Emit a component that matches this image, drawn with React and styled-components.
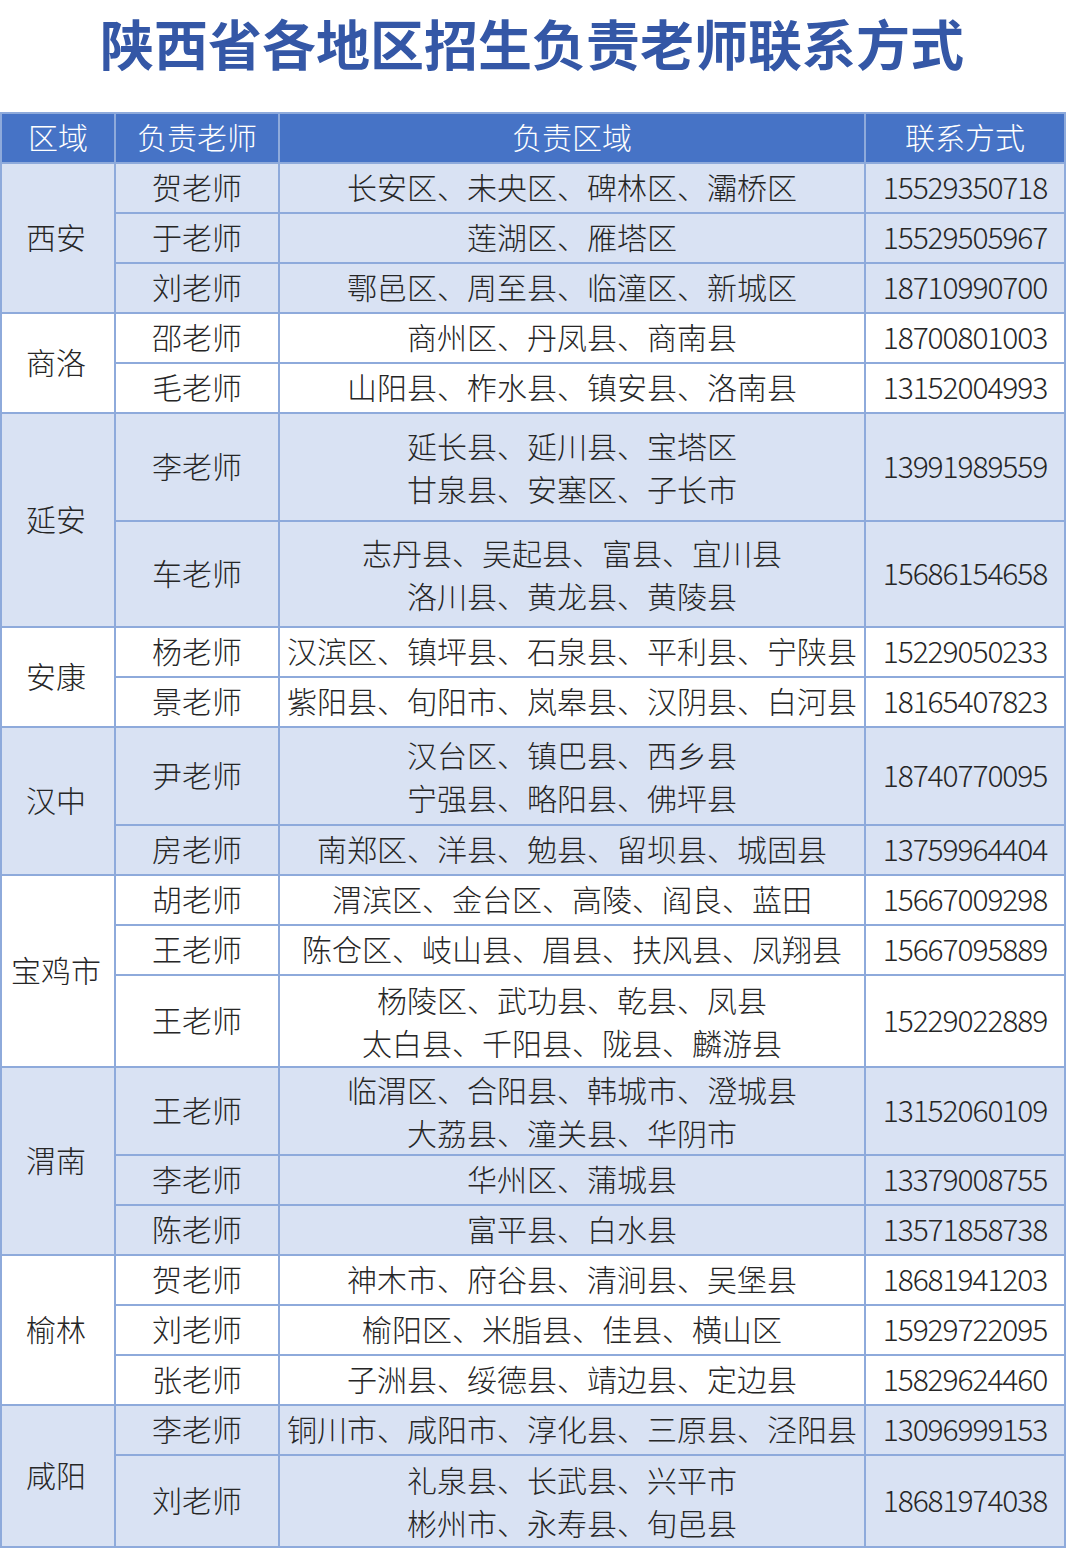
import React from "react";
import styled, { createGlobalStyle } from "styled-components";

const GlobalStyle = createGlobalStyle`
  html, body {
    margin: 0;
    padding: 0;
    background: #ffffff;
  }
  body {
    font-family: "Noto Sans CJK SC", "Noto Sans", sans-serif;
    color: #222;
  }
`;

const groups = [
  {
    area: "西安",
    rows: [
      { name: "贺老师", scope: ["长安区、未央区、碑林区、灞桥区"], phone: "15529350718" },
      { name: "于老师", scope: ["莲湖区、雁塔区"], phone: "15529505967" },
      { name: "刘老师", scope: ["鄠邑区、周至县、临潼区、新城区"], phone: "18710990700" },
    ],
  },
  {
    area: "商洛",
    rows: [
      { name: "邵老师", scope: ["商州区、丹凤县、商南县"], phone: "18700801003" },
      { name: "毛老师", scope: ["山阳县、柞水县、镇安县、洛南县"], phone: "13152004993" },
    ],
  },
  {
    area: "延安",
    rows: [
      { name: "李老师", scope: ["延长县、延川县、宝塔区", "甘泉县、安塞区、子长市"], phone: "13991989559", h: 108 },
      { name: "车老师", scope: ["志丹县、吴起县、富县、宜川县", "洛川县、黄龙县、黄陵县"], phone: "15686154658", h: 106 },
    ],
  },
  {
    area: "安康",
    rows: [
      { name: "杨老师", scope: ["汉滨区、镇坪县、石泉县、平利县、宁陕县"], phone: "15229050233" },
      { name: "景老师", scope: ["紫阳县、旬阳市、岚皋县、汉阴县、白河县"], phone: "18165407823" },
    ],
  },
  {
    area: "汉中",
    rows: [
      { name: "尹老师", scope: ["汉台区、镇巴县、西乡县", "宁强县、略阳县、佛坪县"], phone: "18740770095", h: 98 },
      { name: "房老师", scope: ["南郑区、洋县、勉县、留坝县、城固县"], phone: "13759964404" },
    ],
  },
  {
    area: "宝鸡市",
    rows: [
      { name: "胡老师", scope: ["渭滨区、金台区、高陵、阎良、蓝田"], phone: "15667009298" },
      { name: "王老师", scope: ["陈仓区、岐山县、眉县、扶风县、凤翔县"], phone: "15667095889" },
      { name: "王老师", scope: ["杨陵区、武功县、乾县、凤县", "太白县、千阳县、陇县、麟游县"], phone: "15229022889", h: 92 },
    ],
  },
  {
    area: "渭南",
    rows: [
      { name: "王老师", scope: ["临渭区、合阳县、韩城市、澄城县", "大荔县、潼关县、华阴市"], phone: "13152060109", h: 88 },
      { name: "李老师", scope: ["华州区、蒲城县"], phone: "13379008755" },
      { name: "陈老师", scope: ["富平县、白水县"], phone: "13571858738" },
    ],
  },
  {
    area: "榆林",
    rows: [
      { name: "贺老师", scope: ["神木市、府谷县、清涧县、吴堡县"], phone: "18681941203" },
      { name: "刘老师", scope: ["榆阳区、米脂县、佳县、横山区"], phone: "15929722095" },
      { name: "张老师", scope: ["子洲县、绥德县、靖边县、定边县"], phone: "15829624460" },
    ],
  },
  {
    area: "咸阳",
    rows: [
      { name: "李老师", scope: ["铜川市、咸阳市、淳化县、三原县、泾阳县"], phone: "13096999153" },
      { name: "刘老师", scope: ["礼泉县、长武县、兴平市", "彬州市、永寿县、旬邑县"], phone: "18681974038", h: 92 },
    ],
  },
];

export default function App() {
  return (
    <Page>
      <GlobalStyle />
      <Title>陕西省各地区招生负责老师联系方式</Title>
      <Table>
        <colgroup>
          <col style={{ width: 114 }} />
          <col style={{ width: 164 }} />
          <col style={{ width: 586 }} />
          <col style={{ width: 200 }} />
        </colgroup>
        <thead>
          <HeadRow>
            <HeadCell>区域</HeadCell>
            <HeadCell>负责老师</HeadCell>
            <HeadCell>负责区域</HeadCell>
            <HeadCell>联系方式</HeadCell>
          </HeadRow>
        </thead>
        <tbody>
          {groups.map((g, gi) =>
            g.rows.map((r, ri) => (
              <Row key={`${gi}-${ri}`} $shaded={gi % 2 === 0} $h={r.h || 50}>
                {ri === 0 && <AreaCell rowSpan={g.rows.length}>{g.area}</AreaCell>}
                <Cell>{r.name}</Cell>
                <Cell $multi={r.scope.length > 1}>
                  {r.scope.map((line, li) => (
                    <ScopeLine key={li}>{line}</ScopeLine>
                  ))}
                </Cell>
                <Phone>{r.phone}</Phone>
              </Row>
            ))
          )}
        </tbody>
      </Table>
    </Page>
  );
}

const Page = styled.div`
  width: 1080px;
  min-height: 1562px;
  background: #fff;
`;

const Title = styled.h1`
  margin: 0;
  padding: 10px 0 0 0;
  height: 102px;
  box-sizing: border-box;
  width: 1064px;
  text-align: center;
  font-family: "Noto Sans CJK SC", sans-serif;
  font-weight: 700;
  font-size: 54px;
  line-height: 66px;
  color: #3457a6;
`;

const Table = styled.table`
  width: 1064px;
  border-collapse: collapse;
  table-layout: fixed;
  margin-top: 10px;
`;

const HeadRow = styled.tr`
  height: 50px;
  background: #4673c6;
`;

const HeadCell = styled.th`
  border: 2px solid #8eaadb;
  color: #fff;
  font-weight: 300;
  font-size: 30px;
  line-height: 1;
  padding: 0 0 4px 0;
  text-align: center;
  vertical-align: middle;
`;

const Row = styled.tr`
  height: ${(p) => p.$h}px;
  background: ${(p) => (p.$shaded ? "#d9e2f3" : "#ffffff")};
`;

const Cell = styled.td`
  border: 2px solid #8eaadb;
  padding: 0 0 ${(p) => (p.$multi ? 0 : 3)}px 0;
  text-align: center;
  vertical-align: middle;
  font-size: 30px;
  font-weight: 300;
  line-height: 43px;
  color: #262626;
  white-space: nowrap;
`;

const AreaCell = styled(Cell)`
  padding-right: 4px;
`;

const ScopeLine = styled.div`
  line-height: 43px;
`;

const Phone = styled(Cell)`
  letter-spacing: -1.1px;
  font-size: 30px;
`;
